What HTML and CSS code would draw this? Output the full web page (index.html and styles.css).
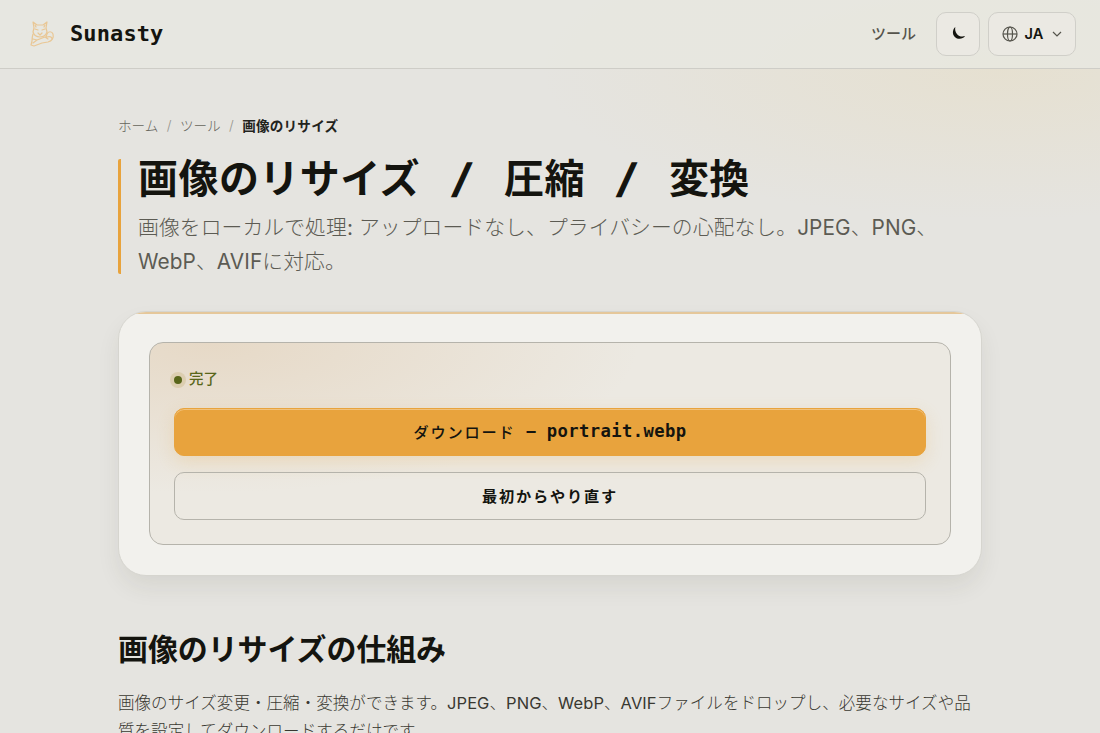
FILE: index.html
```html
<!DOCTYPE html>
<html lang="ja">

<head>
    <meta charset="UTF-8" />
    <meta name="viewport" content="width=device-width, initial-scale=1.0" />
    <title>画像のリサイズ | Sunasty</title>
    <link rel="stylesheet" href="styles.css">
</head>

<body>
    <header class="site-header">
        <a class="brand" href="#">
            <svg class="brand-logo" viewBox="0 0 28 28" fill="none" stroke="currentColor" stroke-linejoin="round" stroke-linecap="round">
                <path d="M6 8 5 2l4 3h6l4-3-1 6 1 4c-1 3-4 5-7 5s-6-2-7-5z" />
                <path d="M7 9l3 1M17 9l-3 1M10 13l2 2 2-2M7 5l1 2M17 5l-1 2" />
                <path d="M5 14c-1 3-1 5-1 7l-1 4 3 1 8-3 6-1c4-1 6-4 5-8-1-3-5-3-6 0l-1 3M5 19l4 1 8-3 3 2M9 20l-4 3M19 17c3-1 5 0 5 2" />
            </svg>
            <span>Sunasty</span>
        </a>
        <nav class="nav">
            <a class="nav-link" href="#">ツール</a>
            <button class="icon-btn" aria-label="テーマ">
                <svg width="16" height="16" viewBox="0 0 16 16">
                    <path d="M5.300 1C2.300 3.800 2.200 8.300 4.800 10.900c2.800 2.800 8 2.500 10.300-.8-3.300 1-6.200.2-8-1.900C5.300 6 4.800 3.700 5.300 1z" fill="currentColor" />
                </svg>
            </button>
            <button class="lang-btn">
                <svg class="globe" width="16" height="16" viewBox="0 0 16 16" fill="none" stroke="currentColor" stroke-width="1.2">
                    <circle cx="8" cy="8" r="7" />
                    <ellipse cx="8" cy="8" rx="2.5" ry="7" />
                    <path d="M1 8h14" />
                </svg>
                <span>JA</span>
                <svg class="chevron" width="10" height="10" viewBox="0 0 10 10" fill="none" stroke="currentColor" stroke-width="1.2">
                    <path d="M1 3l4 4 4-4" />
                </svg>
            </button>
        </nav>
    </header>

    <main class="container">
        <nav class="breadcrumb">
            <a href="#">ホーム</a>
            <span class="sep">/</span>
            <a href="#">ツール</a>
            <span class="sep">/</span>
            <strong>画像のリサイズ</strong>
        </nav>

        <div class="hero">
            <h1>画像のリサイズ <span class="slash">/</span> 圧縮 <span class="slash">/</span> 変換</h1>
            <p>画像をローカルで処理<span class="latin">:</span> アップロードなし、プライバシーの心配なし。<span class="latin">JPEG</span>、<span class="latin">PNG</span>、<br><span class="latin">WebP</span>、<span class="latin">AVIF</span>に対応。</p>
        </div>

        <section class="card">
            <div class="result">
                <div class="status"><span class="dot"></span><span class="status-text">完了</span></div>
                <button class="btn btn-primary"><span class="label">ダウンロード</span><span class="dash">–</span><span class="file">portrait.webp</span></button>
                <button class="btn btn-ghost">最初からやり直す</button>
            </div>
        </section>

        <section class="article">
            <h2>画像のリサイズの仕組み</h2>
            <p>画像のサイズ変更・圧縮・変換ができます。<span class="latin">JPEG</span>、<span class="latin">PNG</span>、<span class="latin">WebP</span>、<span class="latin">AVIF</span>ファイルをドロップし、必要なサイズや品<br>質を設定してダウンロードするだけです。</p>
        </section>
    </main>
</body>

</html>
```

FILE: styles.css
```css
* {
    box-sizing: border-box;
}

body {
    margin: 0;
    height: 733px;
    overflow: hidden;
    font-family: Inter, 'Noto Sans CJK JP', sans-serif;
    color: #14140f;
    background:
        radial-gradient(ellipse 460px 150px at 1000px 70px, rgba(232, 212, 160, 0.24), transparent),
        #e5e4e0;
}

a {
    color: inherit;
    text-decoration: none;
}

button {
    font-family: inherit;
    color: inherit;
    padding: 0;
}

.site-header {
    display: flex;
    align-items: center;
    justify-content: space-between;
    height: 69px;
    padding: 0 24px 1px 28px;
    background: rgba(232, 231, 225, 0.85);
    border-bottom: 1px solid #cecdc7;
}

.brand {
    display: flex;
    align-items: center;
    gap: 14px;
    font: bold 22px 'DejaVu Sans Mono', monospace;
    letter-spacing: 0.1px;
}

.brand-logo {
    width: 28px;
    height: 28px;
    color: #e9c795;
    stroke-width: 1.2;
}

.nav {
    display: flex;
    align-items: center;
    gap: 8px;
}

.nav-link {
    margin-right: 12px;
    padding-bottom: 2px;
    font-size: 15px;
    font-weight: 500;
    color: #55544c;
}

.icon-btn,
.lang-btn {
    display: flex;
    align-items: center;
    justify-content: center;
    width: 44px;
    height: 44px;
    border: 1px solid #d0cfc9;
    border-radius: 10px;
    background: #ebe9e3;
}

.lang-btn {
    width: 88px;
    gap: 7px;
    font-size: 14.6px;
    font-weight: 600;
}

.globe,
.chevron {
    color: #55544c;
}

.chevron {
    margin-left: 2px;
}

.container {
    width: 864px;
    margin: 0 auto;
    padding-top: 45px;
}

.breadcrumb {
    display: flex;
    align-items: center;
    gap: 8.4px;
    height: 22px;
    font-size: 13.6px;
    font-weight: 300;
    color: #65645c;
}

.breadcrumb .sep {
    color: #96958e;
}

.breadcrumb strong {
    font-weight: 600;
    letter-spacing: 0.2px;
    color: #23231d;
}

.hero {
    height: 115px;
    margin-top: 23px;
    padding-left: 17px;
    border-left: 3px solid #e8a33d;
    border-radius: 2px;
}

.hero h1 {
    margin: 0;
    font: bold 40px/40px 'DejaVu Sans Mono', 'Noto Sans CJK JP', monospace;
    letter-spacing: 0.45px;
    word-spacing: 5.2px;
    white-space: nowrap;
}

.slash {
    -webkit-text-stroke: 1.4px currentColor;
}

.hero p {
    margin: 12px 0 0;
    font-size: 20.8px;
    font-weight: 300;
    line-height: 34px;
    letter-spacing: 0.09px;
    color: #5c5b53;
    white-space: nowrap;
}

.latin {
    font-weight: 400;
}

.card {
    position: relative;
    height: 265px;
    margin-top: 37px;
    padding: 30px;
    border: 1px solid #d6d5cf;
    border-radius: 28px;
    background: #f2f1ed;
    box-shadow: 0 12px 24px -2px rgba(60, 60, 30, 0.09);
    overflow: hidden;
}

/* accent line along the top edge */
.card::before {
    content: "";
    position: absolute;
    inset: -1px 0 auto;
    height: 3px;
    background: #e5c79a;
}

.result {
    display: flex;
    flex-direction: column;
    gap: 16px;
    height: 203px;
    padding: 24px;
    border: 1px solid #b5b3ab;
    border-radius: 14px;
    background:
        radial-gradient(ellipse 430px 150px at 60px 0, rgba(217, 180, 135, 0.3), transparent),
        #ece9e2;
}

.status {
    display: flex;
    align-items: center;
    gap: 7px;
    height: 25px;
    font-size: 14.5px;
    font-weight: 500;
    color: #59661a;
}

.status-text {
    padding-bottom: 4px;
}

.dot {
    width: 8px;
    height: 8px;
    border-radius: 50%;
    background: #59661a;
    box-shadow: 0 0 0 4px #dcceb0;
}

.btn {
    display: flex;
    align-items: center;
    justify-content: center;
    flex: none;
    height: 48px;
    padding-bottom: 3px;
    border: 1px solid #b5b3ab;
    border-radius: 10px;
    background: transparent;
    font-size: 15.2px;
    font-weight: 600;
}

.btn-primary {
    border-color: #e8a33d;
    background: #e8a33d;
    box-shadow: 0 6px 18px rgba(232, 163, 61, 0.2), inset 0 1px 0 #f1c27b;
    font-family: 'DejaVu Sans Mono', 'Noto Sans CJK JP', monospace;
}

.label {
    font-weight: 500;
    letter-spacing: 1.8px;
}

.dash {
    margin: 0 11px;
}

.file {
    font-size: 17.2px;
    font-weight: bold;
    letter-spacing: 0.4px;
}

.btn-ghost {
    letter-spacing: 1.8px;
}

.article h2 {
    margin: 51px 0 0;
    font-size: 30px;
    font-weight: 600;
    line-height: 44px;
    letter-spacing: -0.1px;
}

.article p {
    margin: 18px 0 0;
    font-size: 16.5px;
    font-weight: 300;
    line-height: 28px;
    letter-spacing: 0.06px;
    color: #393831;
    white-space: nowrap;
}
```
